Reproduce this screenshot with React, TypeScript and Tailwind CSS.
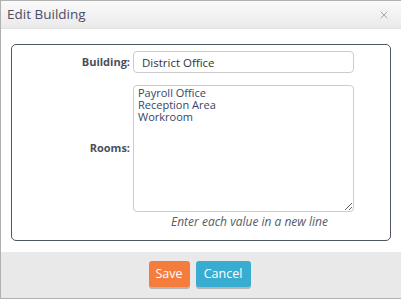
import { X } from "lucide-react";

export default function App() {
  return (
    <div className="flex h-[299px] w-[401px] flex-col overflow-hidden border-t border-b border-l border-[#b0b0b0] bg-white font-['Open_Sans',sans-serif]">
      <div className="flex h-[28px] items-center justify-between border-b border-[#e2e2e2] bg-gradient-to-b from-[#fafafa] to-[#eaeaea] pl-[6px] pr-[11px]">
        <span className="text-[13.5px] text-[#4b4e68]">Edit Building</span>
        <X className="h-[12px] w-[12px] text-[#9a9a9a]" strokeWidth={1.75} />
      </div>

      <div className="flex-1 px-[10px] pt-[15px]">
        <div className="flex h-[197px] w-[380px] flex-col rounded-[5px] border border-[#4f5663] pt-[6px]">
          <div className="flex items-center">
            <label className="w-[118px] text-right text-[11px] font-bold text-[#4a4e5c]">Building:</label>
            <input
              className="ml-[3px] h-[22px] w-[221px] rounded-[4px] border border-[#cccccc] px-[8px] text-[11.5px] text-[#333] outline-none"
              defaultValue="District Office"
            />
          </div>
          <div className="mt-[12px] flex items-center">
            <label className="w-[118px] text-right text-[11px] font-bold text-[#4a4e5c]">Rooms:</label>
            <textarea
              className="ml-[3px] h-[127px] w-[221px] rounded-[4px] border border-[#cccccc] px-[4px] py-[1px] text-[11px] leading-[12px] text-[#34456b] outline-none"
              defaultValue={"Payroll Office\nReception Area\nWorkroom"}
            />
          </div>
          <div className="mt-[1px] pl-[159px] text-[12px] italic text-[#585c68]">Enter each value in a new line</div>
        </div>
      </div>

      <div className="flex h-[46px] items-center justify-center gap-[6px] bg-[#e9e9e9] pb-[2px] pr-[3px]">
        <button className="h-[26px] w-[41px] rounded-[3px] bg-[#f47c3c] text-[12.5px] text-white shadow-[0_2px_0_#b5b5b5]">Save</button>
        <button className="h-[26px] w-[55px] rounded-[3px] bg-[#39add1] text-[12.5px] text-white shadow-[0_2px_0_#b5b5b5]">Cancel</button>
      </div>
    </div>
  );
}
